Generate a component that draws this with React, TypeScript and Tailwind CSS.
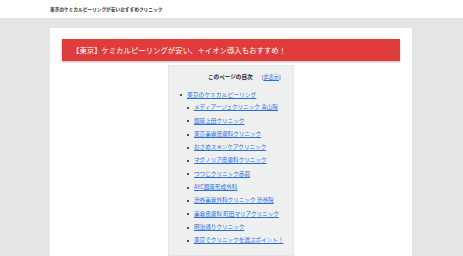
const items = [
  { text: "メディアージュクリニック 青山院" },
  { text: "銀座上田クリニック" },
  { text: "東京美容皮膚科クリニック" },
  { text: "おさめスキンケアクリニック" },
  { text: "マグノリア皮膚科クリニック" },
  { text: "つつじクリニック赤羽" },
  { text: "AYC銀座形成外科" },
  { text: "渋谷美容外科クリニック 渋谷院" },
  { text: "美容皮膚科 町田マリアクリニック" },
  { text: "明治通りクリニック" },
  { text: "東京でクリニックを選ぶポイント！" },
];

export default function App() {
  return (
    <div
      className="flex h-[256px] w-[463px] flex-col overflow-hidden bg-[#e5e5e5]"
      style={{ fontFamily: '"Noto Sans CJK JP", "Noto Sans", sans-serif' }}
    >
      <header className="flex h-[18px] shrink-0 items-center bg-white pl-[50px]">
        <h1 className="text-[4.7px] font-bold leading-none text-[#333]">
          東京のケミカルピーリングが安いおすすめクリニック
        </h1>
      </header>

      <main className="ml-[50px] mt-[10px] flex w-[362px] grow flex-col bg-white">
        <div className="mx-[12px] mt-[11px] flex h-[22px] items-center bg-[#e03c3c] pl-[10px] shadow-[0_1px_2px_rgba(0,0,0,0.3)]">
          <h2 className="text-[7.4px] leading-none text-white">
            【東京】ケミカルピーリングが安い、＋イオン導入もおすすめ！
          </h2>
        </div>

        <div className="ml-[118px] mt-[4px] w-[126px] grow border border-[#e4e6e6] bg-[#eef0f0] pt-[6px]">
          <div className="flex items-center gap-[9px] pl-[39px] leading-[10px]">
            <span className="text-[5.6px] font-bold text-[#222]">このページの目次</span>
            <span className="text-[5.2px] text-[#222]">
              [<span className="text-[#2a6fd6] underline">非表示</span>]
            </span>
          </div>
          <ul className="mt-[6px] pl-[11px]">
            <li className="flex items-center gap-[5px] leading-[13.3px]">
              <span className="h-[2px] w-[2px] shrink-0 rounded-full bg-[#222]"></span>
              <span className="text-[5.8px] text-[#2a6fd6] underline">東京のケミカルピーリング</span>
            </li>
            <ul className="pl-[7px]">
              {items.map((it) => (
                <li key={it.text} className="flex items-center gap-[5px] leading-[13.3px]">
                  <span className="h-[2px] w-[2px] shrink-0 rounded-full bg-[#222]"></span>
                  <span className="whitespace-nowrap text-[5.6px] text-[#2a6fd6] underline">
                    {it.text}
                  </span>
                </li>
              ))}
            </ul>
          </ul>
        </div>
      </main>
    </div>
  );
}
